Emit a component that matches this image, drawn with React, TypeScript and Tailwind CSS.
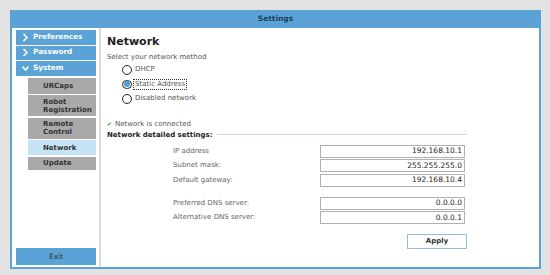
import { FC } from 'react';

const font = { fontFamily: '"DejaVu Sans", "Liberation Sans", sans-serif' };

const Chevron: FC<{ down?: boolean }> = ({ down }) => (
  <svg width="7" height="9" viewBox="0 0 7 9" className="shrink-0">
    {down ? (
      <path d="M0.5 2.5 L3.5 6 L6.5 2.5" fill="none" stroke="white" strokeWidth="1.6" />
    ) : (
      <path d="M1.5 1 L5 4.5 L1.5 8" fill="none" stroke="white" strokeWidth="1.6" />
    )}
  </svg>
);

const NavItem: FC<{ label: string; down?: boolean }> = ({ label, down }) => (
  <div className="flex h-[14.5px] items-center gap-[4px] bg-[#5ba3d7] pl-[6px] text-[7.3px] font-bold text-white">
    <Chevron down={down} />
    <span>{label}</span>
  </div>
);

const SubItem: FC<{ label: string[]; h: string; active?: boolean }> = ({ label, h, active }) => (
  <div
    className={`flex flex-col justify-center pl-[15px] text-[7px] font-bold leading-[8px] text-[#333] ${h} ${
      active ? 'bg-[#c6e3f6]' : 'bg-[#a9a9a9]'
    }`}
  >
    {label.map((l) => (
      <span key={l}>{l}</span>
    ))}
  </div>
);

const Radio: FC<{ label: string; checked?: boolean }> = ({ label, checked }) => (
  <div className="flex h-[14.5px] items-center pl-[15px]">
    <div className="flex h-[9.5px] w-[9.5px] items-center justify-center rounded-full border-[1.5px] border-[#222] bg-white">
      {checked && <div className="h-[6px] w-[6px] rounded-full bg-[#4a9fda]" />}
    </div>
    <span
      className={`ml-[1.5px] px-[1px] text-[7px] leading-[9px] text-[#555] ${
        checked ? 'border border-dotted border-[#333]' : 'border border-transparent'
      }`}
    >
      {label}
    </span>
  </div>
);

const Field: FC<{ label: string; value: string }> = ({ label, value }) => (
  <div className="flex h-[13px] items-center">
    <span className="w-[213px] shrink-0 pl-[66px] text-[7px] text-[#666]">{label}</span>
    <div className="flex h-[13px] w-[145px] items-center justify-end border border-[#b0b0b0] bg-white pr-[2px] text-[7.5px] text-[#222]">
      {value}
    </div>
  </div>
);

export default function App() {
  return (
    <div className="h-[275px] w-[550px] overflow-hidden bg-[#e2e2e2] pl-[10px] pt-[10px]" style={font}>
      <div className="flex h-[259px] w-[531px] flex-col border-2 border-[#5ba3d7] bg-white">
        {/* Title bar */}
        <div className="flex h-[16px] shrink-0 items-center justify-center bg-[#5ba3d7] pb-[2px] text-[7.5px] font-bold text-[#1d3d5c]">
          Settings
        </div>

        <div className="flex flex-1">
          {/* Sidebar */}
          <div className="flex w-[89px] flex-col border-r-2 border-[#dcdcdc] pl-[4px] pr-[3px] pt-[2px] pb-[2px]">
            <div className="flex flex-col gap-[1px]">
              <NavItem label="Preferences" />
              <NavItem label="Password" />
              <NavItem label="System" down />
            </div>
            <div className="ml-[12px] mt-[2px] flex flex-col gap-[1.5px]">
              <SubItem label={['URCaps']} h="h-[16px]" />
              <SubItem label={['Robot', 'Registration']} h="h-[21px]" />
              <SubItem label={['Remote', 'Control']} h="h-[21px]" />
              <SubItem label={['Network']} h="h-[15px]" active />
              <SubItem label={['Update']} h="h-[13px]" />
            </div>
            <div className="mt-auto flex h-[17px] items-center justify-center bg-[#5ba3d7] text-[7.5px] text-[#333]">
              Exit
            </div>
          </div>

          {/* Content */}
          <div className="flex flex-1 flex-col pl-[6px]">
            <div className="mt-[7px] text-[11px] font-bold leading-[14px] text-[#222]">Network</div>
            <div className="mt-[2.5px] text-[7px] leading-[10px] text-[#555]">Select your network method</div>
            <div className="mt-[1px] flex flex-col">
              <Radio label="DHCP" />
              <Radio label="Static Address" checked />
              <Radio label="Disabled network" />
            </div>
            <div className="mt-[12.5px] flex items-center gap-[3px] text-[7px] leading-[10px] text-[#555]">
              <span className="text-[6px] text-[#4a9a3a]">✔</span>
              <span>Network is connected</span>
            </div>
            <div className="mt-[1px] flex items-center gap-[4px] pr-[72px]">
              <span className="text-[7px] font-bold leading-[10px] text-[#222]">Network detailed settings:</span>
              <div className="h-px flex-1 bg-[#c0dcec]" />
            </div>

            <div className="mt-[5px] flex flex-col gap-[1.5px]">
              <Field label="IP address" value="192.168.10.1" />
              <Field label="Subnet mask:" value="255.255.255.0" />
              <Field label="Default gateway:" value="192.168.10.4" />
            </div>
            <div className="mt-[10px] flex flex-col gap-[1.5px]">
              <Field label="Preferred DNS server:" value="0.0.0.0" />
              <Field label="Alternative DNS server:" value="0.0.0.1" />
            </div>

            <div className="ml-[300px] mt-[9.5px] flex h-[15px] w-[60px] items-center justify-center border border-[#8ec0e0] bg-white text-[7px] font-bold text-[#333]">
              Apply
            </div>
          </div>
        </div>
      </div>
    </div>
  );
}
